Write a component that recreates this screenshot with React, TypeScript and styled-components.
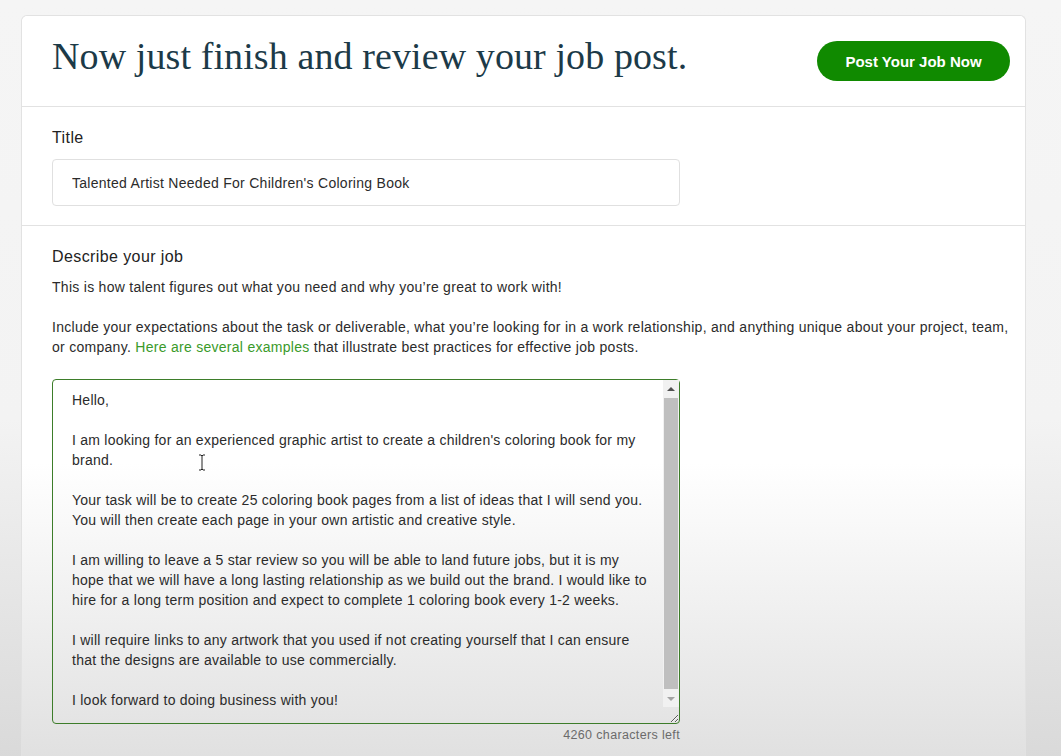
import React from 'react'
import styled, {createGlobalStyle} from 'styled-components'

const GlobalStyle = createGlobalStyle`
    html, body {
        margin: 0;
        padding: 0;
    }
    body {
        min-height: 756px;
        background: linear-gradient(180deg, #f5f5f5 0%, #f3f3f3 55%, #d9d9d9 100%);
        font-family: 'Liberation Sans', Arial, sans-serif;
        letter-spacing: 0.28px;
        color: #2b2b2b;
    }
`

const Page = styled.div`
    padding: 15px 35px 0 21px;
`

const Card = styled.div`
    border: 1px solid #e2e2e2;
    border-bottom: none;
    border-radius: 6px 6px 0 0;
    background: linear-gradient(180deg, #ffffff 0%, #ffffff 60%, #e0e0e0 100%);
    min-height: 741px;
`

const Header = styled.header`
    display: flex;
    align-items: center;
    justify-content: space-between;
    height: 90px;
    padding: 0 15px 0 30px;
    border-bottom: 1px solid #e2e2e2;
    background: #fff;
    border-radius: 6px 6px 0 0;
`

const Heading = styled.h1`
    margin: 0;
    font-family: 'Liberation Serif', 'Times New Roman', serif;
    font-weight: 400;
    font-size: 38px;
    letter-spacing: 0.1px;
    color: #1c3a48;
    transform: translateY(-5px);
`

const PostButton = styled.button`
    width: 193px;
    height: 40px;
    padding: 0;
    border: none;
    border-radius: 20px;
    background: #108a00;
    color: #fff;
    font-family: 'Liberation Sans', Arial, sans-serif;
    font-weight: 700;
    font-size: 15px;
    white-space: nowrap;
    cursor: pointer;
`

const Section = styled.section<{$divided?: boolean}>`
    padding: 21px 12px 19px 30px;
    border-bottom: ${p => (p.$divided ? '1px solid #e2e2e2' : 'none')};
`

const Label = styled.div`
    font-size: 16px;
    line-height: 20px;
    letter-spacing: 0.4px;
    color: #222;
`

const TitleInput = styled.input`
    display: block;
    box-sizing: border-box;
    margin-top: 11px;
    width: 628px;
    height: 47px;
    padding: 0 19px;
    border: 1px solid #e0e0e0;
    border-radius: 4px;
    font-family: 'Liberation Sans', Arial, sans-serif;
    font-size: 14px;
    letter-spacing: 0.28px;
    color: #2b2b2b;
    outline: none;
`

const Paragraph = styled.p<{$gap: number}>`
    margin: ${p => p.$gap}px 0 0;
    font-size: 14px;
    line-height: 20px;
    color: #2b2b2b;
`

const Link = styled.a`
    color: #3a9a2a;
    text-decoration: none;
`

const EditorWrap = styled.div`
    position: relative;
    width: 628px;
    margin-top: 22px;
`

const Editor = styled.textarea`
    display: block;
    box-sizing: border-box;
    width: 628px;
    height: 345px;
    padding: 10px 25px 10px 19px;
    border: 1px solid #3d7d2a;
    border-radius: 4px;
    background: transparent;
    font-family: 'Liberation Sans', Arial, sans-serif;
    font-size: 14px;
    line-height: 20px;
    letter-spacing: 0.24px;
    color: #2b2b2b;
    overflow: hidden;
    outline: none;
    resize: both;
`

const Scrollbar = styled.div`
    position: absolute;
    top: 1px;
    right: 1px;
    bottom: 17px;
    width: 16px;
    display: flex;
    flex-direction: column;
    background: #f1f1f1;
    pointer-events: none;
`

const Arrow = styled.div<{$down?: boolean}>`
    height: 17px;
    display: flex;
    align-items: center;
    justify-content: center;

    &::before {
        content: '';
        border-left: 4px solid transparent;
        border-right: 4px solid transparent;
        border-bottom: ${p => (p.$down ? 'none' : '4px solid #505050')};
        border-top: ${p => (p.$down ? '4px solid #a3a3a3' : 'none')};
    }
`

const Track = styled.div`
    flex: 1;
    display: flex;
    padding: 1px 0;
`

const Thumb = styled.div`
    flex: 1;
    margin: 0 1px;
    background: #bfbfbf;
`

const Cursor = styled.svg`
    position: absolute;
    left: 146px;
    top: 75px;
    pointer-events: none;
`

const Counter = styled.div`
    width: 628px;
    margin-top: 4px;
    text-align: right;
    font-size: 12.5px;
    line-height: 14px;
    letter-spacing: 0.35px;
    color: #6b6b6b;
`

const jobText = `Hello,

I am looking for an experienced graphic artist to create a children's coloring book for my brand.

Your task will be to create 25 coloring book pages from a list of ideas that I will send you. You will then create each page in your own artistic and creative style.

I am willing to leave a 5 star review so you will be able to land future jobs, but it is my hope that we will have a long lasting relationship as we build out the brand. I would like to hire for a long term position and expect to complete 1 coloring book every 1-2 weeks.

I will require links to any artwork that you used if not creating yourself that I can ensure that the designs are available to use commercially.

I look forward to doing business with you!`

export default function App() {
    return (
        <>
            <GlobalStyle />
            <Page>
                <Card>
                    <Header>
                        <Heading>Now just finish and review your job post.</Heading>
                        <PostButton>Post Your Job Now</PostButton>
                    </Header>
                    <Section $divided>
                        <Label>Title</Label>
                        <TitleInput defaultValue="Talented Artist Needed For Children's Coloring Book" />
                    </Section>
                    <Section>
                        <Label>Describe your job</Label>
                        <Paragraph $gap={10}>
                            This is how talent figures out what you need and why you’re great to work with!
                        </Paragraph>
                        <Paragraph $gap={20}>
                            Include your expectations about the task or deliverable, what you’re looking for in a work
                            relationship, and anything unique about your project, team, or company.{' '}
                            <Link href="#">Here are several examples</Link> that illustrate best practices for
                            effective job posts.
                        </Paragraph>
                        <EditorWrap>
                            <Editor defaultValue={jobText} />
                            <Scrollbar>
                                <Arrow />
                                <Track>
                                    <Thumb />
                                </Track>
                                <Arrow $down />
                            </Scrollbar>
                            <Cursor width="8" height="17" viewBox="0 0 8 17">
                                <path d="M1 1h2l1 1 1-1h2M4 2v13M1 16h2l1-1 1 1h2" fill="none" stroke="#222" strokeWidth="1" />
                            </Cursor>
                        </EditorWrap>
                        <Counter>4260 characters left</Counter>
                    </Section>
                </Card>
            </Page>
        </>
    )
}
